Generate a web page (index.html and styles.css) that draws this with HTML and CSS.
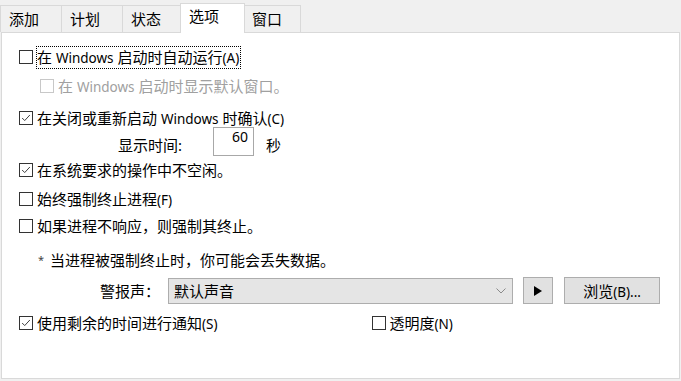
FILE: index.html
```html
<!DOCTYPE html>
<html>

<head>
	<title>选项</title>
	<meta charset="utf-8">
	<link rel="stylesheet" href="styles.css">
</head>

<body>
	<nav class="tabs">
		<div class="tab t1">添加</div>
		<div class="tab t2">计划</div>
		<div class="tab t3">状态</div>
		<div class="tab valgt">选项</div>
		<div class="tab t5">窗口</div>
	</nav>

	<main class="panel">
		<div class="row r1">
			<span class="cb"></span>
			<span class="txt focus">在 <span class="lat">Windows</span> 启动时自动运行<span class="lat">(A)</span></span>
		</div>
		<div class="row r2 off">
			<span class="cb"></span>
			<span class="txt">在 <span class="lat">Windows</span> 启动时显示默认窗口。</span>
		</div>
		<div class="row r3">
			<span class="cb"><svg viewBox="0 0 14 14"><polyline points="2.5,7 5.5,10 11.5,3.5" /></svg></span>
			<span class="txt">在关闭或重新启动 <span class="lat">Windows</span> 时确认<span class="lat">(C)</span></span>
		</div>
		<div class="row r4">
			<span class="lbl-tid">显示时间:</span>
			<span class="felt lat">60</span>
			<span class="sek">秒</span>
		</div>
		<div class="row r5">
			<span class="cb"><svg viewBox="0 0 14 14"><polyline points="2.5,7 5.5,10 11.5,3.5" /></svg></span>
			<span class="txt">在系统要求的操作中不空闲。</span>
		</div>
		<div class="row r6">
			<span class="cb"></span>
			<span class="txt">始终强制终止进程<span class="lat">(F)</span></span>
		</div>
		<div class="row r7">
			<span class="cb"></span>
			<span class="txt">如果进程不响应，则强制其终止。</span>
		</div>
		<div class="row r8">
			<span class="stjerne">*</span>
			<span class="txt">当进程被强制终止时，你可能会丢失数据。</span>
		</div>
		<div class="row r9">
			<span class="lbl-lyd">警报声：</span>
			<div class="dropdown">
				<span>默认声音</span>
				<svg class="pil" viewBox="0 0 10 6"><polyline points="0.5,0.5 5,5 9.5,0.5" /></svg>
			</div>
			<button class="knap play"><svg viewBox="0 0 8 10"><polygon points="0,0 8,5 0,10" /></svg></button>
			<button class="knap browse">浏览<span class="lat">(B)...</span></button>
		</div>
		<div class="row r10">
			<span class="cb"><svg viewBox="0 0 14 14"><polyline points="2.5,7 5.5,10 11.5,3.5" /></svg></span>
			<span class="txt">使用剩余的时间进行通知<span class="lat">(S)</span></span>
			<span class="cb cb2"></span>
			<span class="txt">透明度<span class="lat">(N)</span></span>
		</div>
	</main>
</body>

</html>
```

FILE: styles.css
```css
body {
	margin: 0;
	padding: 0;
	background-color: #f0f0f0;
	font-family: "Noto Sans", "Noto Sans CJK SC", sans-serif;
	font-size: 15px;
	color: #000;
	width: 681px;
	height: 381px;
	overflow: hidden;
}

.lat {
	font-size: 13.5px;
}

/* faner */
.tabs {
	display: flex;
	align-items: flex-end;
	height: 32px;
}

.tab {
	box-sizing: border-box;
	height: 27px;
	border: 1px solid #d9d9d9;
	border-bottom: none;
	padding: 3px 0 0 8px;
	line-height: 20px;
	background-color: #f0f0f0;
}

.t1 {
	width: 62px;
}

.t2 {
	width: 62px;
	margin-left: -1px;
}

.t3 {
	width: 61px;
	margin-left: -1px;
}

.valgt {
	width: 65px;
	height: 30px;
	margin-left: -3px;
	margin-bottom: -1px;
	padding-top: 2px;
	background-color: #fff;
	position: relative;
	z-index: 2;
}

.t5 {
	width: 58px;
	margin-left: -2px;
}

/* panel */
.panel {
	box-sizing: border-box;
	margin-left: 1px;
	width: 679px;
	height: 347px;
	background-color: #fff;
	border: 1px solid #d9d9d9;
	padding: 14px 0 0 17px;
}

.row {
	display: flex;
	align-items: center;
	height: 20px;
	line-height: 20px;
	white-space: nowrap;
}

.cb {
	box-sizing: border-box;
	width: 14px;
	height: 14px;
	border: 1px solid #333;
	background-color: #fff;
	margin-right: 4px;
	flex-shrink: 0;
}

.cb svg {
	display: block;
	width: 12px;
	height: 12px;
	fill: none;
	stroke: #333;
	stroke-width: 1.1;
}

.focus {
	outline: 1px dotted #000;
	outline-offset: 0;
	padding-right: 1px;
}

.r2 {
	margin-top: 9px;
	padding-left: 21px;
}

.off .cb {
	border-color: #c8c8c8;
}

.off .txt {
	color: #a0a0a0;
}

.r3 {
	margin-top: 12px;
}

.r4 {
	margin-top: -1px;
	height: 29px;
	padding-left: 99px;
	align-items: flex-start;
}

.lbl-tid {
	width: 95px;
	margin-top: 8px;
}

.felt {
	box-sizing: border-box;
	width: 41px;
	height: 29px;
	border: 1px solid #a8a8a8;
	text-align: right;
	padding: 0 5px 0 0;
	line-height: 18px;
	font-size: 14px;
}

.sek {
	margin-left: 12px;
	margin-top: 8px;
}

.r5 {
	margin-top: 4px;
}

.r6 {
	margin-top: 9px;
}

.r7 {
	margin-top: 7px;
}

.r8 {
	margin-top: 14px;
	padding-left: 19px;
}

.stjerne {
	font-size: 11px;
	width: 12px;
	color: #444;
}

.r9 {
	margin-top: 7px;
	height: 27px;
	padding-left: 81px;
}

.lbl-lyd {
	width: 68px;
}

.dropdown {
	box-sizing: border-box;
	width: 345px;
	height: 26px;
	background-color: #e5e5e5;
	border: 1px solid #adadad;
	padding-left: 5px;
	display: flex;
	align-items: center;
	justify-content: space-between;
}

.pil {
	width: 10px;
	height: 6px;
	margin-right: 6px;
	fill: none;
	stroke: #8a8a8a;
	stroke-width: 1;
}

.knap {
	box-sizing: border-box;
	height: 27px;
	background-color: #e1e1e1;
	border: 1px solid #adadad;
	font-family: inherit;
	font-size: inherit;
	color: #000;
	padding: 0;
}

.play {
	width: 30px;
	margin-left: 10px;
	display: flex;
	align-items: center;
	justify-content: center;
}

.play svg {
	width: 8px;
	height: 10px;
	fill: #000;
}

.browse {
	width: 96px;
	margin-left: 11px;
}

.r10 {
	margin-top: 9px;
}

.cb2 {
	margin-left: 154px;
}
```
